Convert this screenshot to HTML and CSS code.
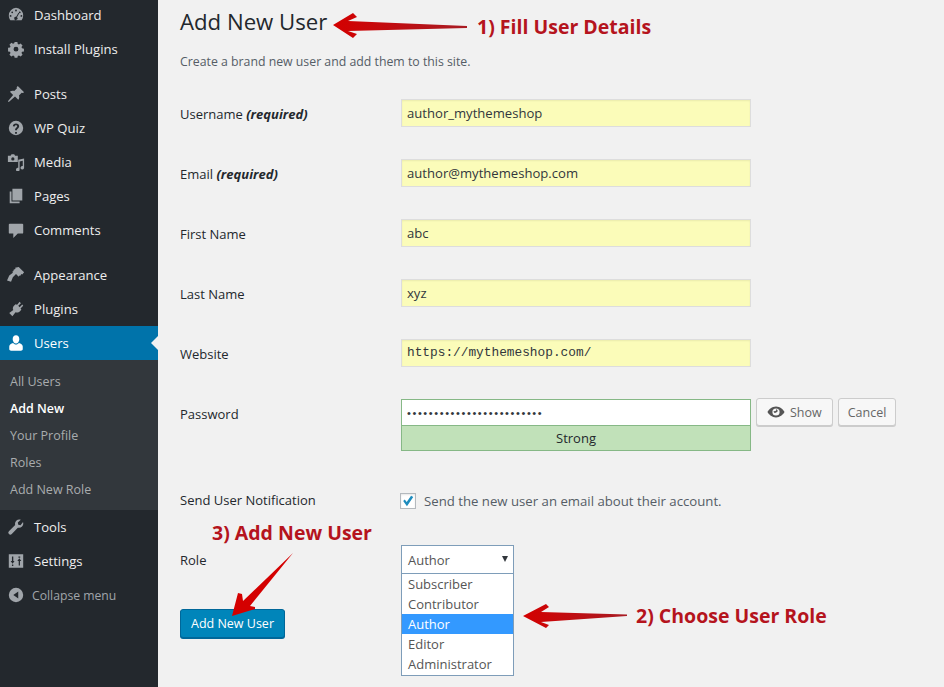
FILE: index.html
```html
<!DOCTYPE html>
<html lang="en">
<head>
    <meta charset="UTF-8">
    <meta name="viewport" content="width=device-width, initial-scale=1.0">
    <title>Add New User</title>
    <link rel="stylesheet" href="styles.css">
</head>
<body>
    <div class="page">
        <nav class="sidebar">
            <ul class="menu">
                <li><a href="#"><svg viewBox="0 0 20 20"><path d="M10 2a8.5 8.5 0 0 0-8 8.5c0 2 .7 3.800 1.800 5.200h12.400A8.400 8.400 0 0 0 18 10.500 8.500 8.500 0 0 0 10 2zm0 2a1 1 0 1 1 0 2 1 1 0 0 1 0-2zM5.800 6a1 1 0 1 1 0 2 1 1 0 0 1 0-2zm8.400 0a1 1 0 1 1 0 2 1 1 0 0 1 0-2zM4 10a1 1 0 1 1 0 2 1 1 0 0 1 0-2zm12 0a1 1 0 1 1 0 2 1 1 0 0 1 0-2zm-3.300-2.500.9.500-2.500 4.500a1.800 1.800 0 1 1-.9-.5z" fill-rule="evenodd"/></svg>Dashboard</a></li>
                <li><a href="#"><svg viewBox="0 0 20 20"><path d="M8.300 1.500h3.400l.5 2.400 1.500.6 2-1.300 2.400 2.400-1.300 2 .6 1.500 2.400.5v3.400l-2.400.5-.6 1.500 1.300 2-2.400 2.400-2-1.300-1.500.6-.5 2.100H8.300l-.5-2.100-1.500-.6-2 1.300-2.400-2.400 1.300-2-.6-1.500-2.400-.5V8.600l2.400-.5.6-1.500-1.300-2 2.400-2.400 2 1.300 1.500-.6zM10 7.200a3 3 0 1 0 0 6 3 3 0 0 0 0-6z" fill-rule="evenodd" transform="translate(1 1) scale(.9)"/></svg>Install Plugins</a></li>
                <li class="sep"><a href="#"><svg viewBox="0 0 20 20"><path d="M12 1l7 7-1.500 1-1.200-.4-3 3c.6 1.800.3 3.400-.8 4.900l-3.600-3.600L2 19l-1-1 5.800-6.900-3.600-3.600c1.500-1.100 3.100-1.400 4.900-.8l3-3-.4-1.200z"/></svg>Posts</a></li>
                <li><a href="#"><svg viewBox="0 0 20 20"><path d="M10 2a8 8 0 1 0 0 16 8 8 0 0 0 0-16zm-1 12.500h2v2H9zM10 5c2 0 3.500 1.200 3.500 3 0 2.400-2.500 2.500-2.500 4.500H9c0-3 2.300-3 2.300-4.500 0-.7-.6-1.100-1.300-1.100-.8 0-1.400.5-1.500 1.300L6.500 8C6.700 6.200 8 5 10 5z" fill-rule="evenodd"/></svg>WP Quiz</a></li>
                <li><a href="#"><svg viewBox="0 0 20 20"><path d="M1 3h3l1-1.500h3L9 3h3v7H1zm5.500 1.800a1.800 1.800 0 1 0 0 3.600 1.800 1.800 0 0 0 0-3.600zM19 6v10.500a2 2 0 1 1-1.500-2V8.500L14 9.500v9a2 2 0 1 1-1.500-2v-9z" fill-rule="evenodd"/></svg>Media</a></li>
                <li><a href="#"><svg viewBox="0 0 20 20"><path d="M6 2h11v13H6zM3 5h2v11h9v2H3z"/></svg>Pages</a></li>
                <li><a href="#"><svg viewBox="0 0 20 20"><path d="M3 3h14a1 1 0 0 1 1 1v9a1 1 0 0 1-1 1h-5l-5 5v-5H3a1 1 0 0 1-1-1V4a1 1 0 0 1 1-1z"/></svg>Comments</a></li>
                <li class="sep"><a href="#"><svg viewBox="0 0 20 20"><path d="M13 1l6 6-2 2.500-1-.5-1.500 2-1-.5-.5 1.500-3-3-3.500 3.500-2 5-4.500-1.500 2.500-5.500 4-3L6 6l1.500-.5-.5-1 2.500-1.500-.5-1z"/></svg>Appearance</a></li>
                <li><a href="#"><svg viewBox="0 0 20 20"><path d="M15 2l1.500 1.500L13.500 6.500l1.500 1.500 3-3L19 6.500 16 9.500l1 1-1.500 2c-1.500 1.500-3.500 2-5 1l-3.500 4.500-3.500-3.500L8 11c-1-1.500-.5-3.500 1-5l2-1.500 1 1z" transform="translate(-1 0)"/></svg>Plugins</a></li>
                <li class="current"><a href="#"><svg viewBox="0 0 20 20"><path d="M10 1.500c2.200 0 3.700 1.800 3.700 4.200S12 10.500 10 10.500 6.300 8 6.300 5.700 7.800 1.500 10 1.500zM6.700 10c.8 1 2 1.700 3.300 1.700s2.500-.7 3.300-1.700c2 .6 4.200 2 4.200 4v3c0 1-1 1.500-2 1.500H4.500c-1 0-2-.5-2-1.500v-3c0-2 2.200-3.400 4.200-4z"/></svg>Users</a>
                    <ul class="submenu">
                        <li><a href="#">All Users</a></li>
                        <li class="active"><a href="#">Add New</a></li>
                        <li><a href="#">Your Profile</a></li>
                        <li><a href="#">Roles</a></li>
                        <li><a href="#">Add New Role</a></li>
                    </ul>
                </li>
                <li><a href="#"><svg viewBox="0 0 20 20"><path d="M17.800 4.500c.6 1.700.2 3.700-1.100 5-1.300 1.300-3.100 1.700-4.700 1.200l-6.700 7a2.200 2.200 0 0 1-3.200-3.100l7-6.800c-.5-1.600 0-3.400 1.200-4.700 1.300-1.300 3.300-1.700 5-1.100L12 5l.5 2.500L15 8z"/></svg>Tools</a></li>
                <li><a href="#"><svg viewBox="0 0 20 20"><path d="M2 2.500h16v15H2zM5.500 5v5H4l2.200 3 2.200-3H7V5zM13 15v-5h-1.500L13.700 7l2.200 3h-1.500v5zM5.500 14v1.500H7V14zM12.700 5v1.500h2V5z" fill-rule="evenodd"/></svg>Settings</a></li>
                <li class="collapse"><a href="#"><svg viewBox="0 0 20 20"><path d="M10 2a8 8 0 1 1 0 16 8 8 0 0 1 0-16zm2.500 4.200L7 10l5.500 3.800z" fill-rule="evenodd"/></svg>Collapse menu</a></li>
            </ul>
        </nav>

        <main class="content">
            <h1>Add New User</h1>
            <p class="intro">Create a brand new user and add them to this site.</p>

            <form class="user-form">
                <div class="form-row">
                    <label for="user-login">Username <em>(required)</em></label>
                    <input class="field filled" type="text" id="user-login" value="author_mythemeshop">
                </div>
                <div class="form-row">
                    <label for="user-email">Email <em>(required)</em></label>
                    <input class="field filled" type="text" id="user-email" value="author@mythemeshop.com">
                </div>
                <div class="form-row">
                    <label for="first-name">First Name</label>
                    <input class="field filled" type="text" id="first-name" value="abc">
                </div>
                <div class="form-row">
                    <label for="last-name">Last Name</label>
                    <input class="field filled" type="text" id="last-name" value="xyz">
                </div>
                <div class="form-row">
                    <label for="website">Website</label>
                    <input class="field filled mono" type="text" id="website" value="https://mythemeshop.com/">
                </div>
                <div class="form-row password-row">
                    <label for="password">Password</label>
                    <div class="password-box">
                        <input class="password-input" type="password" id="password" value="aaaaaaaaaaaaaaaaaaaaaaaaa">
                        <div class="strength">Strong</div>
                    </div>
                    <button type="button" class="btn">
                        <svg viewBox="0 0 20 20"><path d="M10 4c4.500 0 7.800 3.200 9.500 6-1.700 2.800-5 6-9.500 6S2.200 12.800.5 10C2.200 7.200 5.500 4 10 4zm0 2a4 4 0 1 0 0 8 4 4 0 0 0 0-8zm-2.500 3a1.500 1.500 0 0 0 2.500 1.500c.9 0 1.800-.8 1.800-1.800C11.800 7.700 11 7 10 7c1 1-.5 2.700-2.500 2z" fill-rule="evenodd"/></svg>
                        Show
                    </button>
                    <button type="button" class="btn btn-cancel">Cancel</button>
                </div>
                <div class="form-row notify-row">
                    <label for="notify">Send User Notification</label>
                    <div class="check-line">
                        <span class="checkbox" id="notify"><svg viewBox="0 0 16 16"><path d="M2.500 8l1.800-1.700 2.200 2.700L11.500 2 14 3.500 6.800 14z"/></svg></span>
                        Send the new user an email about their account.
                    </div>
                </div>
                <div class="form-row role-row">
                    <label>Role</label>
                    <div class="select-box">
                        <div class="select-value">Author<span class="caret"></span></div>
                        <ul class="select-list">
                            <li>Subscriber</li>
                            <li>Contributor</li>
                            <li class="selected">Author</li>
                            <li>Editor</li>
                            <li>Administrator</li>
                        </ul>
                    </div>
                </div>
                <button type="submit" class="btn-primary">Add New User</button>
            </form>
        </main>

        <svg class="arrows" viewBox="0 0 944 687">
            <defs>
                <linearGradient id="red-left" x1="0" x2="1" y1="0" y2="0">
                    <stop offset="0" stop-color="#d40000"/>
                    <stop offset="1" stop-color="#a81c24"/>
                </linearGradient>
            </defs>
            <path fill="url(#red-left)" d="M333 25 353 13 357 17 348 21 467 26V28L348 31 357 34 353 38z"/>
            <path fill="url(#red-left)" d="M523 616 546 604 549 607 541 612 627 614.500V616L541 622 549 625 546 628z"/>
            <path fill="#d40000" d="M232 616 238 593 242 594 243 601 293 553 250 606 255 607 255 609z"/>
        </svg>
        <span class="callout callout-fill">1) Fill User Details</span>
        <span class="callout callout-add">3) Add New User</span>
        <span class="callout callout-role">2) Choose User Role</span>
    </div>
</body>
</html>
```

FILE: styles.css
```css
* {
    box-sizing: border-box;
}
html, body {
    margin: 0;
    padding: 0;
    height: 100%;
    overflow: hidden;
}
body {
    font-family: "Open Sans", "Noto Sans", sans-serif;
    font-size: 13px;
    color: #32373c;
    background: #f1f1f1;
}
.page {
    position: relative;
    display: flex;
    width: 944px;
    height: 687px;
    overflow: hidden;
}
ul {
    list-style: none;
    margin: 0;
    padding: 0;
}

/* sidebar */
.sidebar {
    flex: 0 0 158px;
    background: #23282d;
}
.menu {
    margin-top: -2px;
}
.menu > li > a {
    display: flex;
    align-items: center;
    gap: 9px;
    height: 34px;
    padding-left: 7px;
    color: #eee;
    font-size: 13.1px;
    text-decoration: none;
}
.menu svg {
    flex: 0 0 18px;
    width: 18px;
    height: 18px;
    fill: #a0a5aa;
}
.menu > li.sep {
    margin-top: 11px;
}
.menu > .current > a {
    position: relative;
    background: #0073aa;
    color: #fff;
}
.menu > .current > a::after {
    content: "";
    position: absolute;
    right: 0;
    top: 10px;
    border: 7px solid transparent;
    border-left-width: 0;
    border-right-color: #f1f1f1;
}
.menu > .current svg {
    fill: #fff;
}
.submenu {
    background: #32373c;
    padding: 8px 0 7px;
}
.submenu a {
    display: block;
    height: 27px;
    line-height: 27px;
    padding-left: 10px;
    color: #a9acae;
    font-size: 12.5px;
    text-decoration: none;
}
.submenu .active a {
    color: #fff;
    font-weight: 600;
}
.menu > .collapse > a {
    color: #a0a5aa;
    gap: 7px;
    font-size: 12.2px;
}

/* main column */
.content {
    flex: 1;
    padding: 0 22px;
}
h1 {
    margin: 7px 0 0;
    font-size: 22.2px;
    line-height: 30px;
    font-weight: 400;
    color: #23282d;
}
.intro {
    margin: 16px 0 0;
    font-size: 12.3px;
    line-height: 18px;
    color: #555d66;
}
.user-form {
    margin-top: 14px;
}
.form-row {
    display: flex;
    align-items: center;
    height: 60px;
    padding-bottom: 5px;
}
.form-row label {
    flex: 0 0 221px;
    padding-top: 2px;
    font-size: 13px;
    color: #23282d;
}
.form-row em {
    font-weight: 700;
}
.field {
    width: 350px;
    height: 28px;
    padding: 0 5px;
    border: 1px solid #ddd;
    font-family: inherit;
    font-size: 13.1px;
    color: #32373c;
    outline: none;
    box-shadow: inset 0 1px 2px rgba(0,0,0,0.07);
}
.filled {
    background: #fbfcb9;
}
.field.mono {
    font-family: "Liberation Mono", monospace;
    font-size: 12.8px;
}

/* password */
.password-row {
    align-items: flex-start;
    height: 100px;
    margin-top: 14px;
}
.password-row label {
    padding-top: 6px;
}
.password-box {
    width: 350px;
    border: 1px solid #86b886;
}
.password-input {
    display: block;
    width: 100%;
    height: 25px;
    padding: 0 5px;
    border: 0;
    background: #fff;
    font-size: 11px;
    letter-spacing: 1.6px;
    color: #32373c;
    outline: none;
}
.strength {
    height: 25px;
    line-height: 24px;
    border-top: 1px solid #86b886;
    background: #c1e1b9;
    text-align: center;
    color: #23282d;
}
.btn {
    display: flex;
    align-items: center;
    gap: 5px;
    height: 28px;
    margin-left: 5px;
    margin-top: -1px;
    padding: 0 10px;
    border: 1px solid #ccc;
    border-radius: 3px;
    background: #f7f7f7;
    box-shadow: 0 1px 0 #ccc;
    font-family: inherit;
    font-size: 12.5px;
    color: #666;
}
.btn-cancel {
    padding: 0 9px;
}
.btn svg {
    width: 18px;
    height: 18px;
    fill: #555;
}

/* notification + role */
.notify-row {
    height: 30px;
    padding-bottom: 0;
    margin-top: -14px;
}
.notify-row label {
    padding-top: 0;
}
.check-line {
    display: flex;
    align-items: center;
    gap: 8px;
    margin-left: -1px;
    padding-top: 1px;
    color: #555d66;
    font-size: 13.2px;
}
.checkbox {
    display: block;
    width: 16px;
    height: 16px;
    border: 1px solid #b4b9be;
    background: #fff;
    box-shadow: inset 0 1px 2px rgba(0,0,0,0.1);
}
.checkbox svg {
    display: block;
    fill: #1e8cbe;
}
.role-row {
    height: 28px;
    margin-top: 30px;
    padding-bottom: 0;
    align-items: flex-start;
}
.role-row label {
    padding-top: 6px;
}
.select-box {
    position: relative;
    width: 113px;
}
.select-value {
    position: relative;
    height: 29px;
    line-height: 29px;
    padding-left: 6px;
    border: 1px solid #7e9db9;
    background: #fff;
    color: #555;
}
.caret {
    position: absolute;
    right: 5px;
    top: 10px;
    border: 3.5px solid transparent;
    border-top: 6px solid #32373c;
    border-bottom: 0;
}
.select-list {
    position: absolute;
    left: 0;
    right: 0;
    top: 29px;
    padding-bottom: 1px;
    border: 1px solid #7e9db9;
    border-top: 0;
    background: #fff;
    color: #555;
}
.select-list li {
    height: 20px;
    line-height: 20px;
    padding-left: 6px;
}
.select-list .selected {
    background: #3399ff;
    color: #fff;
}
.btn-primary {
    display: block;
    width: 105px;
    height: 29px;
    margin-top: 36px;
    border: 1px solid #006799;
    border-radius: 3px;
    background: #0085ba;
    box-shadow: 0 1px 0 #006799;
    font-family: inherit;
    font-size: 12.5px;
    color: #fff;
}

/* red annotations on top of the screenshot */
.arrows {
    position: absolute;
    left: 0;
    top: 0;
    width: 944px;
    height: 687px;
    pointer-events: none;
}
.callout {
    position: absolute;
    font-size: 19.5px;
    font-weight: 700;
    line-height: 24px;
    color: #b5141d;
    white-space: nowrap;
}
.callout-fill {
    left: 477px;
    top: 15px;
}
.callout-add {
    left: 212px;
    top: 521px;
}
.callout-role {
    left: 636px;
    top: 604px;
}
```
